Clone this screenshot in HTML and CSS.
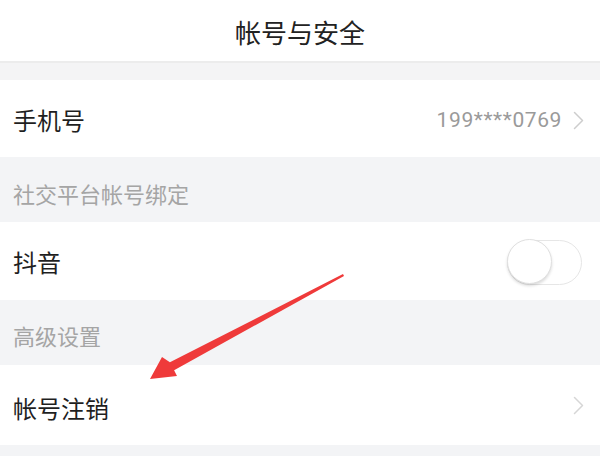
FILE: index.html
```html
<!DOCTYPE html>
<html lang="zh-CN">
<head>
<meta charset="utf-8">
<title>帐号与安全</title>
<link rel="stylesheet" href="styles.css">
</head>
<body>
<div class="page">
  <header class="title-bar"><h1 class="title">帐号与安全</h1></header>
  <div class="gap-top"></div>
  <div class="row row-phone">
    <span class="label">手机号</span>
    <span class="trail">
      <span class="value">199****0769</span>
      <svg class="chevron" viewBox="0 0 11 19" width="11" height="19"><polyline points="1.5,1.5 9.5,9.5 1.5,17.5" fill="none" stroke="#cdcdcd" stroke-width="1.5" stroke-linejoin="round" stroke-linecap="round"/></svg>
    </span>
  </div>
  <div class="section section-social">社交平台帐号绑定</div>
  <div class="row row-douyin">
    <span class="label">抖音</span>
    <span class="toggle"><span class="knob"></span></span>
  </div>
  <div class="section section-adv">高级设置</div>
  <div class="row row-cancel">
    <span class="label">帐号注销</span>
    <svg class="chevron" viewBox="0 0 11 19" width="11" height="19"><polyline points="1.5,1.5 9.5,9.5 1.5,17.5" fill="none" stroke="#d6d6d6" stroke-width="1.5" stroke-linejoin="round" stroke-linecap="round"/></svg>
  </div>
  <svg class="arrow" viewBox="0 0 600 456" width="600" height="456">
    <polygon points="343,274 169.9,362.3 162,357 150,379 177,376 174.1,370.3 344,276" fill="#ef3a3a"/>
  </svg>
</div>
</body>
</html>
```
FILE: styles.css
```css
html, body {
  margin: 0;
  padding: 0;
  background: #f3f4f6;
}
body {
  font-family: "Noto Sans CJK SC", "Noto Sans", sans-serif;
  color: #1f1f1f;
}
.page {
  position: relative;
  width: 600px;
  height: 456px;
  overflow: hidden;
  background: #f3f4f6;
}
.title-bar {
  height: 61px;
  background: #fff;
  border-bottom: 2px solid #ececec;
  display: flex;
  align-items: center;
  justify-content: center;
}
.title {
  margin: 0;
  font-size: 26px;
  font-weight: 400;
  line-height: 1;
  color: #222;
  padding-top: 2px;
}
.gap-top {
  height: 17px;
  background: #f4f4f5;
}
.row {
  background: #fff;
  display: flex;
  align-items: center;
  justify-content: space-between;
  padding: 0 16px 0 13px;
}
.row-phone { height: 77px; padding-top: 3px; box-sizing: border-box; }
.row-douyin { height: 78px; padding-top: 2px; box-sizing: border-box; padding-right: 18px; }
.row-cancel { height: 80px; padding-top: 5px; box-sizing: border-box; }
.label {
  font-size: 24px;
  line-height: 1;
  color: #1f1f1f;
}
.trail {
  display: flex;
  align-items: center;
  gap: 11px;
}
.value {
  font-family: Roboto, "Liberation Sans", sans-serif;
  font-size: 21px;
  letter-spacing: 0.6px;
  line-height: 1;
  color: #9a9a9a;
}
.chevron {
  display: block;
}
.row-cancel .chevron {
  margin-top: -5px;
}
.section {
  height: 65px;
  box-sizing: border-box;
  display: flex;
  align-items: center;
  padding-left: 13px;
  font-size: 22px;
  line-height: 1;
  color: #a5a5a5;
  background: #f3f4f6;
}
.section-social { padding-top: 6px; }
.section-adv { padding-top: 4px; }
.toggle {
  position: relative;
  width: 75px;
  height: 45px;
  box-sizing: border-box;
  border: 1.5px solid #e6e6e6;
  border-radius: 23px;
  background: #fff;
}
.knob {
  position: absolute;
  left: -1.5px;
  top: -1.5px;
  width: 45px;
  height: 45px;
  box-sizing: border-box;
  border-radius: 50%;
  background: #fff;
  border: 1px solid #e0e0e0;
  box-shadow: 0 2px 3px rgba(0, 0, 0, 0.14);
}
.arrow {
  position: absolute;
  left: 0;
  top: 0;
  pointer-events: none;
}
```
